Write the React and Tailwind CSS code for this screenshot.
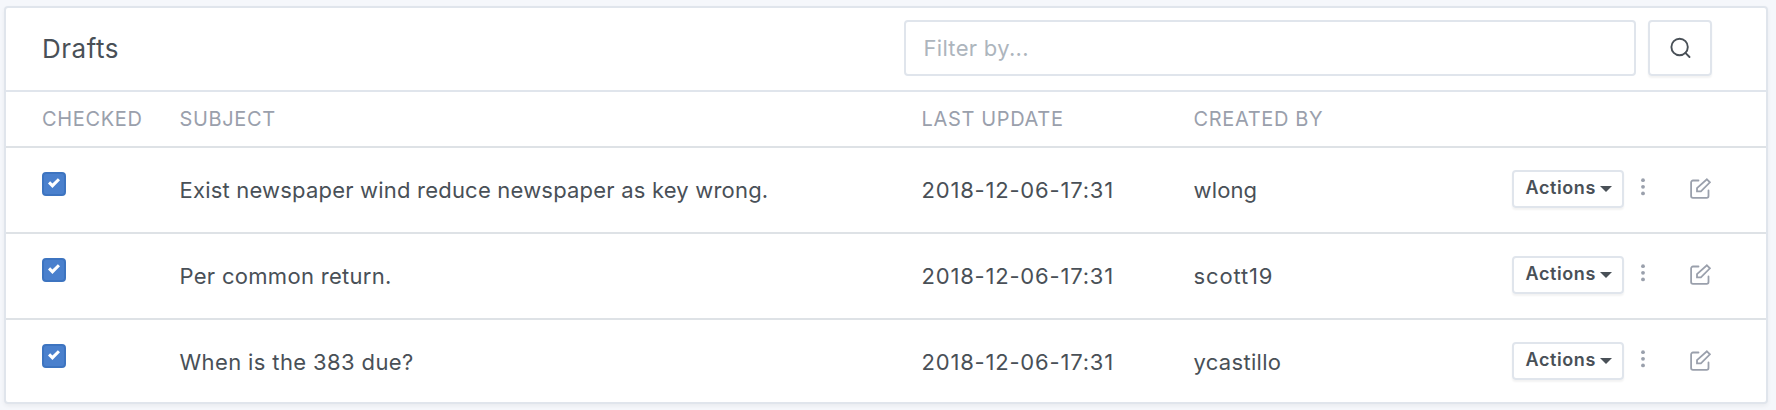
const rows = [
  { subject: "Exist newspaper wind reduce newspaper as key wrong.", subjectTrack: "tracking-[0.2px]", date: "2018-12-06-17:31", by: "wlong", h: "h-[86px] border-b-2", track: "tracking-[0.15px]" },
  { subject: "Per common return.", subjectTrack: "tracking-[0.3px]", date: "2018-12-06-17:31", by: "scott19", h: "h-[86px] border-b-2", track: "tracking-[0.85px]" },
  { subject: "When is the 383 due?", subjectTrack: "tracking-[0.38px]", date: "2018-12-06-17:31", by: "ycastillo", h: "h-[82px]", track: "tracking-[0.3px]" },
];

const cols = "grid grid-cols-[137.5px_742px_272px_318.5px_1fr] pl-9 pr-[54px]";

function Check() {
  return (
    <span className="mt-6 flex size-6 rounded-[4px] border-2 border-[#3d74c0] bg-[#4a80cd]">
      <svg viewBox="0 0 8 8" className="ml-[3.5px] mt-[3px] size-3" fill="#fff">
        <path d="M6.564.75l-3.59 3.612-1.538-1.55L0 4.26 2.974 7.25 8 2.193z" />
      </svg>
    </span>
  );
}

function EditIcon() {
  return (
    <svg viewBox="0 0 24 24" className="ml-[42px] mt-[6px] size-6 shrink-0" fill="none" stroke="#9aa0ac" strokeWidth="1.8" strokeLinecap="round" strokeLinejoin="miter">
      <path d="M9.5 4.5H4a1.9 1.9 0 0 0-1.9 1.9v13.6A1.9 1.9 0 0 0 4 21.9h13.6a1.9 1.9 0 0 0 1.9-1.9V14.4" />
      <path d="M17.9 3.3l3 3L11.9 15.4H8v-3.2z" />
    </svg>
  );
}

export default function App() {
  return (
    <div className="h-[410px] w-[1776px] bg-[#f5f7fb] pl-1 pt-[6px] font-['Inter',sans-serif] text-[22px] text-[#495057]">
      <div className="h-[398px] w-[1764px] overflow-hidden rounded-[4px] border-2 border-[#e0e5ec] bg-white shadow-[0_2px_4px_rgba(0,0,0,0.05)]">
        <header className="flex h-[84px] items-start justify-between border-b-2 border-[#e0e5ec] pl-9 pr-[54px]">
          <h1 className="mt-[21px] text-[26px] leading-[40px] tracking-[0.5px]">Drafts</h1>
          <div className="mt-3 flex gap-3">
            <input
              placeholder="Filter by..."
              className="h-14 w-[732px] rounded-[4px] border-2 border-[#e0e5ec] pb-[1px] pl-[17.5px] tracking-[0.3px] outline-none placeholder:text-[#adb5bd]"
            />
            <button className="flex h-14 w-16 items-center justify-center rounded-[4px] border-2 border-[#e0e5ec] shadow-[0_2px_2px_rgba(0,0,0,0.05)]">
              <svg viewBox="0 0 24 24" className="size-6" fill="none" stroke="#495057" strokeWidth="1.9" strokeLinecap="round">
                <circle cx="11.6" cy="11" r="8.2" />
                <path d="M21.5 21l-4.1-4.2" />
              </svg>
            </button>
          </div>
        </header>
        <div className={`${cols} h-14 border-b-2 border-[#dee2e6] text-[20px] leading-[54px] tracking-[0.65px] text-[#9aa0ac]`}>
          <span>CHECKED</span>
          <span>SUBJECT</span>
          <span>LAST UPDATE</span>
          <span>CREATED BY</span>
        </div>
        {rows.map((r) => (
          <div key={r.by} className={`${cols} ${r.h} border-[#dee2e6] leading-[84px] whitespace-nowrap`}>
            <Check />
            <span className={r.subjectTrack}>{r.subject}</span>
            <span className="tracking-[0.8px]">{r.date}</span>
            <span className={r.track}>{r.by}</span>
            <div className="flex items-start pt-[22px] leading-none">
              <button className="flex h-[38px] w-28 shrink-0 items-center rounded-[4px] border-2 border-[#e0e5ec] pb-[3px] pl-[11.5px] text-[18px] font-semibold tracking-[0.6px] shadow-[0_2px_2px_rgba(0,0,0,0.05)]">
                Actions
                <svg viewBox="0 0 12 6" className="ml-[4.5px] mt-[2px] h-[6px] w-3" fill="#495057">
                  <path d="M0 0h12L6 6z" />
                </svg>
              </button>
              <svg viewBox="0 0 8 20" className="ml-[14.5px] mt-[7px] h-5 w-2 shrink-0" fill="#9aa0ac">
                <circle cx="4" cy="3.2" r="1.9" />
                <circle cx="4" cy="9.8" r="1.9" />
                <circle cx="4" cy="16.4" r="1.9" />
              </svg>
              <EditIcon />
            </div>
          </div>
        ))}
      </div>
    </div>
  );
}
